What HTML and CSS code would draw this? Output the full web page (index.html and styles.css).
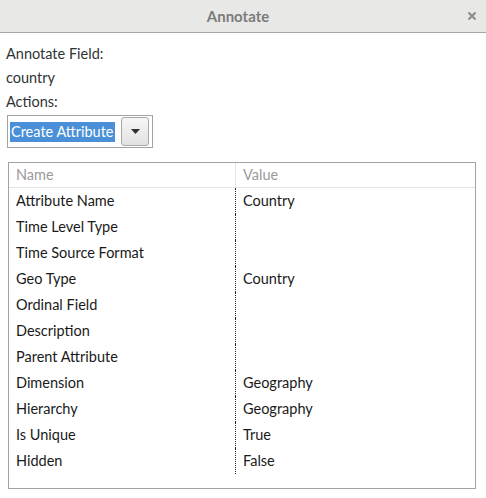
FILE: index.html
```html
<!DOCTYPE html>
<html>
<head>
<meta charset="utf-8">
<link rel="stylesheet" href="styles.css">
</head>
<body>
<div class="titlebar">
  <span class="title">Annotate</span>
  <span class="close">
    <svg width="10" height="10" viewBox="0 0 10 10"><path d="M1.5 1.5 L8.5 8.5 M8.5 1.5 L1.5 8.5" stroke="#8a8a8a" stroke-width="2" fill="none"/></svg>
  </span>
</div>
<div class="content">
  <div class="label">Annotate Field:</div>
  <div class="label">country</div>
  <div class="label">Actions:</div>
  <div class="combo">
    <span class="combo-text">Create Attribute</span>
    <span class="combo-btn">
      <svg width="9" height="5" viewBox="0 0 9 5"><path d="M0 0 H9 L4.5 5 Z" fill="#2e2e2e"/></svg>
    </span>
  </div>
  <div class="table">
    <div class="thead">
      <div class="cell c1">Name</div>
      <div class="cell c2">Value</div>
    </div>
    <div class="tbody">
      <div class="row"><div class="cell c1">Attribute Name</div><div class="cell c2">Country</div></div>
      <div class="row"><div class="cell c1">Time Level Type</div><div class="cell c2"></div></div>
      <div class="row"><div class="cell c1">Time Source Format</div><div class="cell c2"></div></div>
      <div class="row"><div class="cell c1">Geo Type</div><div class="cell c2">Country</div></div>
      <div class="row"><div class="cell c1">Ordinal Field</div><div class="cell c2"></div></div>
      <div class="row"><div class="cell c1">Description</div><div class="cell c2"></div></div>
      <div class="row"><div class="cell c1">Parent Attribute</div><div class="cell c2"></div></div>
      <div class="row"><div class="cell c1">Dimension</div><div class="cell c2">Geography</div></div>
      <div class="row"><div class="cell c1">Hierarchy</div><div class="cell c2">Geography</div></div>
      <div class="row"><div class="cell c1">Is Unique</div><div class="cell c2">True</div></div>
      <div class="row"><div class="cell c1">Hidden</div><div class="cell c2">False</div></div>
    </div>
  </div>
</div>
</body>
</html>
```
FILE: styles.css
```css
html, body {
  margin: 0;
  padding: 0;
  background: #ffffff;
}
body {
  font-family: "Lato", "Open Sans", sans-serif;
  font-size: 14.5px;
  color: #2e3436;
  width: 486px;
  height: 498px;
  overflow: hidden;
}
.titlebar {
  height: 32px;
  background: #e8e8e7;
  border-bottom: 1px solid #a7a7a7;
  display: flex;
  align-items: center;
  justify-content: center;
  position: relative;
}
.title {
  color: #7b7b7b;
  font-weight: 700;
  font-size: 15px;
  padding-right: 10px;
}
.close {
  position: absolute;
  right: 9px;
  top: 11px;
  display: flex;
}
.content {
  padding: 9px 0 0 6px;
}
.label {
  height: 24px;
  line-height: 24px;
}
.combo {
  margin-top: 1px;
  margin-left: 1px;
  width: 146px;
  height: 33px;
  border: 1px solid #a3a3a3;
  box-sizing: border-box;
  display: flex;
  align-items: center;
  padding-left: 2px;
  white-space: nowrap;
}
.combo-text {
  background: #4a90d9;
  color: #ffffff;
  height: 20px;
  line-height: 20px;
  padding: 0 1px;
}
.combo-btn {
  margin-left: auto;
  margin-right: 3px;
  width: 28px;
  height: 29px;
  box-sizing: border-box;
  border: 1px solid #a8a8a8;
  border-radius: 3px;
  background: linear-gradient(#f6f6f6, #e2e2e2);
  display: flex;
  align-items: center;
  justify-content: center;
}
.table {
  margin-top: 14px;
  margin-left: 2px;
  width: 468px;
  height: 327px;
  box-sizing: border-box;
  border: 1px solid #a3a3a3;
}
.thead {
  display: flex;
  height: 25px;
  box-sizing: border-box;
  border-bottom: 1px solid #e3e3e3;
  color: #9a9a9a;
}
.thead .cell {
  line-height: 24px;
}
.thead .c1 {
  border-right: 1px solid #e3e3e3;
}
.cell {
  box-sizing: border-box;
}
.c1 {
  width: 227px;
  padding-left: 7px;
}
.c2 {
  padding-left: 7px;
}
.row {
  display: flex;
  height: 26px;
  line-height: 26px;
  color: #1a1a1a;
}
.row .c1 {
  border-right: 1px dotted #222;
}
```
